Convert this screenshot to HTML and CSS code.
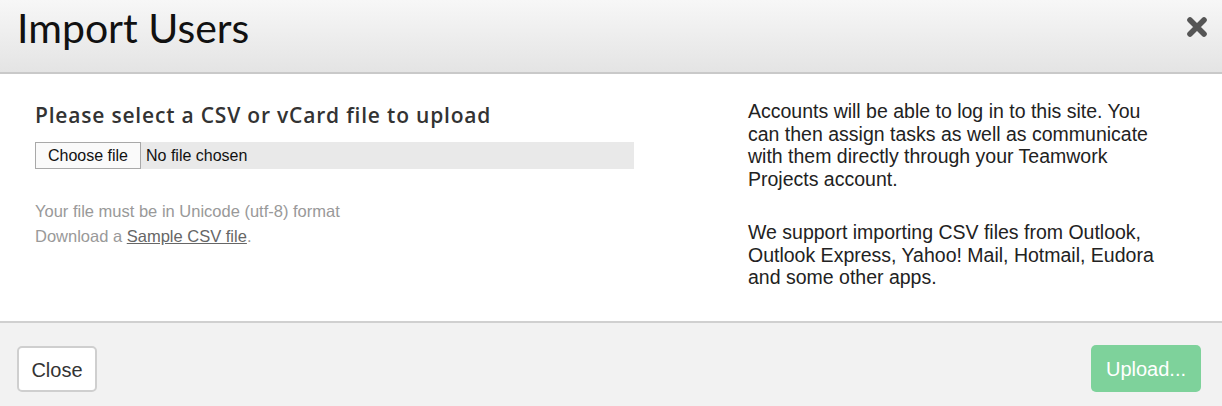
FILE: index.html
```html
<!DOCTYPE html>
<html lang="en">
<head>
<meta charset="utf-8">
<title>Import Users</title>
<link rel="stylesheet" href="styles.css">
</head>
<body>
<div class="modal">
  <header class="modal-header">
    <h1 class="modal-title">Import Users</h1>
    <button class="close-x" aria-label="Close">
      <svg width="22" height="22" viewBox="0 0 22 22"><path d="M4 4 L18 18 M18 4 L4 18" stroke="#555" stroke-width="5.6" stroke-linecap="round" fill="none"/></svg>
    </button>
  </header>
  <section class="modal-body">
    <div class="upload-col">
      <h2 class="upload-title">Please select a CSV or vCard file to upload</h2>
      <div class="file-input">
        <span class="file-btn">Choose file</span>
        <span class="file-name">No file chosen</span>
      </div>
      <p class="hint">Your file must be in Unicode (utf-8) format</p>
      <p class="hint">Download a <a href="#" class="hint-link">Sample CSV file</a>.</p>
    </div>
    <div class="info-col">
      <p class="info">Accounts will be able to log in to this site. You can then assign tasks as well as communicate with them directly through your Teamwork Projects account.</p>
      <p class="info">We support importing CSV files from Outlook, Outlook Express, Yahoo! Mail, Hotmail, Eudora and some other apps.</p>
    </div>
  </section>
  <footer class="modal-footer">
    <button class="btn btn-close">Close</button>
    <button class="btn btn-upload">Upload...</button>
  </footer>
</div>
</body>
</html>
```
FILE: styles.css
```css
* { box-sizing: border-box; }
html, body { margin: 0; padding: 0; background: #fff; }
body { font-family: "Liberation Sans", Arial, sans-serif; color: #222; }

.modal { width: 1222px; height: 406px; display: flex; flex-direction: column; }

.modal-header {
  height: 74px;
  background: linear-gradient(#f7f7f7, #e4e4e4);
  border-bottom: 2px solid #c9c9c9;
  display: flex;
  justify-content: space-between;
  align-items: flex-start;
  padding: 0 14px 0 17px;
}
.modal-title {
  margin: 0;
  font-family: Lato, "Open Sans", sans-serif;
  font-weight: 400;
  font-size: 41px;
  line-height: 56px;
  color: #111;
}
.close-x {
  border: 0;
  background: none;
  padding: 0;
  margin-top: 16px;
  width: 22px;
  height: 22px;
  cursor: pointer;
}
.close-x svg { display: block; }

.modal-body {
  height: 247px;
  display: grid;
  grid-template-columns: 599px 410px;
  column-gap: 114px;
  padding: 26px 0 0 35px;
}
.upload-title {
  margin: 3px 0 15px;
  font-family: "Open Sans", Lato, sans-serif;
  font-weight: 600;
  font-size: 21px;
  letter-spacing: 0.8px;
  line-height: 24px;
  color: #333;
}
.file-input {
  height: 27px;
  background: #e9e9e9;
  display: flex;
  align-items: stretch;
  font-size: 16px;
  margin-bottom: 30px;
}
.file-btn {
  width: 106px;
  background: #fafafa;
  border: 1px solid #a9a9a9;
  display: flex;
  align-items: center;
  justify-content: center;
  color: #111;
}
.file-name { display: flex; align-items: center; padding-left: 5px; color: #111; }

.hint { margin: 0; font-size: 16.5px; line-height: 25px; color: #999; }
.hint-link { color: #666; }

.info { margin: 0 0 31px; font-size: 19.5px; line-height: 22.5px; color: #222; }

.modal-footer {
  flex: 1;
  background: #f2f2f2;
  border-top: 2px solid #d0d0d0;
  display: flex;
  justify-content: space-between;
  align-items: flex-start;
  padding: 22px 21px 0 17px;
}
.btn {
  font-family: "Liberation Sans", Arial, sans-serif;
  font-size: 20px;
  height: 47px;
  border-radius: 5px;
  cursor: pointer;
  padding: 2px 0 0;
}
.btn-close {
  width: 80px;
  margin-top: 1px;
  height: 46px;
  background: #fff;
  border: 2px solid #cfcfcf;
  color: #333;
}
.btn-upload {
  width: 110px;
  background: #7ed29b;
  border: 0;
  color: #fff;
}
```
